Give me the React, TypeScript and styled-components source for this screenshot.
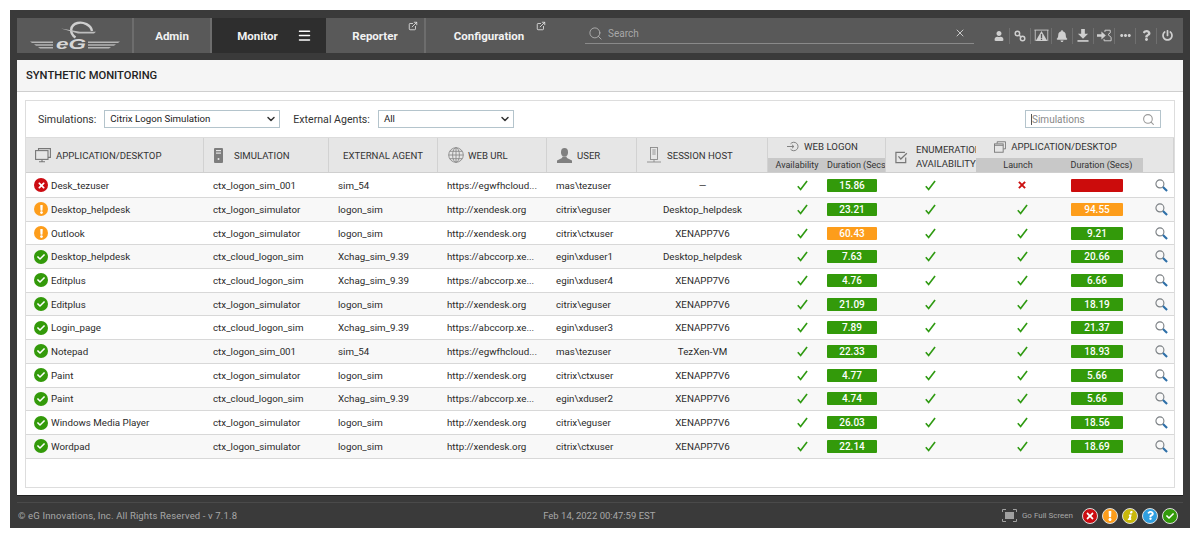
import React from 'react'
import styled, { createGlobalStyle } from 'styled-components'
import { FaUser, FaBell, FaEllipsisH, FaQuestion, FaPowerOff, FaTimes, FaExclamation, FaCheck, FaInfo } from 'react-icons/fa'
import { ChevronDown, Search, X, Menu, ExternalLink } from 'lucide-react'

const GlobalStyle = createGlobalStyle`
	html, body {
		margin: 0;
		background: #fff;
		font-family: Roboto, "Liberation Sans", sans-serif;
	}
	* { box-sizing: border-box; }
	svg { flex-shrink: 0; }
`

const COLUMNS = '178px 125px 109px 109px 90px 131px 58px 59px 91px 84px 83px 31px'

type Tone = 'green' | 'orange' | 'red'
type Status = 'err' | 'warn' | 'ok'

interface RowData {
	status: Status
	app: string
	sim: string
	agent: string
	url: string
	user: string
	host: string
	logon: string
	logonTone: Tone
	launch: boolean
	duration: string
	durationTone: Tone
}

const egwfh = 'https://egwfhcloud...'
const abc = 'https://abccorp.xe...'
const xen = 'http://xendesk.org'
const xa = 'XENAPP7V6'
const dh = 'Desktop_helpdesk'

const make = (status: Status, app: string, sim: string, agent: string, url: string, user: string, host: string, logon: string, duration: string, logonTone: Tone = 'green', durationTone: Tone = 'green', launch = true): RowData => ({
	status, app, sim, agent, url, user, host, logon, duration, logonTone, durationTone, launch,
})

const rows: RowData[] = [
	make('err', 'Desk_tezuser', 'ctx_logon_sim_001', 'sim_54', egwfh, 'mas\\tezuser', '—', '15.86', '', 'green', 'red', false),
	make('warn', dh, 'ctx_logon_simulator', 'logon_sim', xen, 'citrix\\eguser', dh, '23.21', '94.55', 'green', 'orange'),
	make('warn', 'Outlook', 'ctx_logon_simulator', 'logon_sim', xen, 'citrix\\ctxuser', xa, '60.43', '9.21', 'orange'),
	make('ok', dh, 'ctx_cloud_logon_sim', 'Xchag_sim_9.39', abc, 'egin\\xduser1', dh, '7.63', '20.66'),
	make('ok', 'Editplus', 'ctx_cloud_logon_sim', 'Xchag_sim_9.39', abc, 'egin\\xduser4', xa, '4.76', '6.66'),
	make('ok', 'Editplus', 'ctx_logon_simulator', 'logon_sim', xen, 'citrix\\eguser', xa, '21.09', '18.19'),
	make('ok', 'Login_page', 'ctx_cloud_logon_sim', 'Xchag_sim_9.39', abc, 'egin\\xduser3', xa, '7.89', '21.37'),
	make('ok', 'Notepad', 'ctx_logon_sim_001', 'sim_54', egwfh, 'mas\\tezuser', 'TezXen-VM', '22.33', '18.93'),
	make('ok', 'Paint', 'ctx_logon_simulator', 'logon_sim', xen, 'citrix\\ctxuser', xa, '4.77', '5.66'),
	make('ok', 'Paint', 'ctx_cloud_logon_sim', 'Xchag_sim_9.39', abc, 'egin\\xduser2', xa, '4.74', '5.66'),
	make('ok', 'Windows Media Player', 'ctx_logon_simulator', 'logon_sim', xen, 'citrix\\eguser', xa, '26.03', '18.56'),
	make('ok', 'Wordpad', 'ctx_logon_simulator', 'logon_sim', xen, 'citrix\\ctxuser', xa, '22.14', '18.69'),
]

const toneColor: Record<Tone, string> = { green: '#339a0a', orange: '#fd9d1b', red: '#cc0c0c' }

const EgLogo = () => (
	<svg width="110" height="35" viewBox="0 0 110 35">
		<g fill="#b4b4b4">
			<path d="M10 23.5H33V25H12Z" />
			<path d="M14 26.3H33V27.7H16Z" />
			<path d="M18 29H33V30.4H20Z" />
			<path d="M68 23.5H100L98 25H68Z" />
			<path d="M68 26.3H96L94 27.7H68Z" />
			<path d="M68 29H91L89 30.4H68Z" />
		</g>
		<path d="M72 13C71 7 63 3.5 57.5 5C50 7 49 15 55.5 19.5" fill="none" stroke="#cfcfcf" strokeWidth="2.4" />
		<path d="M41 10.5L60 13.8H76L74 15.5H58Z" fill="#bdbdbd" />
		<text x="36" y="31" fontFamily="'Liberation Sans', sans-serif" fontStyle="italic" fontWeight="700" fontSize="15" textLength="30" lengthAdjust="spacingAndGlyphs" fill="#d6d6d6">eG</text>
	</svg>
)

const LinkIcon = () => (
	<svg width="12" height="12" viewBox="0 0 14 14" fill="none" stroke="#cfcfcf" strokeWidth="1.7">
		<circle cx="4" cy="4" r="2.6" />
		<circle cx="10" cy="10" r="2.6" />
		<path d="M6 6l2 2" />
	</svg>
)

const AlarmIcon = () => (
	<svg width="15" height="13" viewBox="0 0 18 14">
		<path d="M0.5 0.5H17.5M1.5 0.5V13.5M16.5 0.5V13.5" stroke="#cfcfcf" fill="none" />
		<path d="M9 1.5L16 13.5H2Z" fill="#cfcfcf" />
		<rect x="8.2" y="5" width="1.6" height="5" fill="#595959" />
		<rect x="8.2" y="10.8" width="1.6" height="1.6" fill="#595959" />
	</svg>
)

const DownloadIcon = () => (
	<svg width="12" height="13" viewBox="0 0 13 14" fill="#cfcfcf">
		<path d="M4.5 0H8.5V5H12L6.5 10.5L1 5H4.5Z" />
		<rect x="0.5" y="12" width="12" height="1.8" />
	</svg>
)

const LoginIcon = () => (
	<svg width="15" height="13" viewBox="0 0 17 14" fill="none">
		<path d="M0 5.5H5V2.5L10 7L5 11.5V8.5H0Z" fill="#cfcfcf" />
		<path d="M9 3 V1 H15 V4 L12.5 6 L16 9 V13 H8 V11" stroke="#cfcfcf" strokeWidth="1.1" />
	</svg>
)

const DesktopIcon = () => (
	<svg width="16" height="15" viewBox="0 0 16 15" fill="none" stroke="#777" strokeWidth="1.1">
		<path d="M3.5 2.5V.6H15.4V9.4H13" />
		<rect x=".6" y="2.6" width="12.4" height="8.8" fill="#e6e6e6" />
		<path d="M4 13.8H10M7 11.5V13.8" />
	</svg>
)

const ServerIcon = () => (
	<svg width="9" height="15" viewBox="0 0 9 15">
		<rect x="0" y="0" width="9" height="15" rx="1" fill="#7d7d7d" />
		<rect x="2" y="2" width="5" height="1.2" fill="#e6e6e6" />
		<rect x="2" y="4.5" width="5" height="1.2" fill="#e6e6e6" />
		<circle cx="4.5" cy="11" r="1" fill="#e6e6e6" />
	</svg>
)

const GlobeIcon = () => (
	<svg width="16" height="16" viewBox="0 0 16 16" fill="none" stroke="#8a8a8a" strokeWidth=".9">
		<circle cx="8" cy="8" r="7.3" />
		<ellipse cx="8" cy="8" rx="3.4" ry="7.3" />
		<path d="M8 .7V15.3M.7 8H15.3M1.7 4.3H14.3M1.7 11.7H14.3" />
	</svg>
)

const UserIcon = () => (
	<svg width="15" height="15" viewBox="0 0 15 15" fill="#7f7f7f">
		<ellipse cx="7.5" cy="4.3" rx="3.5" ry="4.2" />
		<path d="M5.6 8.4H9.4L10 10L15 12.4V15H0V12.4L5 10Z" />
	</svg>
)

const HostIcon = () => (
	<svg width="14" height="16" viewBox="0 0 14 16" fill="none" stroke="#8a8a8a" strokeWidth=".9">
		<rect x="3.5" y=".5" width="7" height="12" />
		<path d="M5.3 3H8.7M5.3 5H8.7M5.3 7H8.7M7 12.5V15M0 15H14" />
	</svg>
)

const LogonIcon = () => (
	<svg width="12" height="11" viewBox="0 0 17 14" fill="none" stroke="#777" strokeWidth="1.3">
		<path d="M5 3.2A6 6 0 1 1 5 10.8" />
		<path d="M0 7H9.5M7 4.5L9.8 7L7 9.5" />
	</svg>
)

const EnumIcon = () => (
	<svg width="13" height="13" viewBox="0 0 17 16" fill="none" stroke="#777" strokeWidth="1.6">
		<path d="M14 8V14.6H1.2V1.2H13" />
		<path d="M4.5 6.5L7.6 10L15.5 2.5" />
	</svg>
)

const WindowsIcon = () => (
	<svg width="12" height="12" viewBox="0 0 17 16" fill="none" stroke="#777" strokeWidth="1.3">
		<path d="M4.5 3V.6H16.4V10.6H13.5" />
		<rect x=".6" y="3.6" width="12.4" height="11.8" />
		<path d="M.6 5.6H13" />
	</svg>
)

const CheckMark = () => (
	<svg width="11" height="11" viewBox="0 0 14 13" fill="none" stroke="#2f9a12" strokeWidth="2.1">
		<path d="M1 7.5L4.6 11.5L12.8 .8" />
	</svg>
)

const CrossMark = () => (
	<svg width="8" height="8" viewBox="0 0 9 9" fill="none" stroke="#cc1111" strokeWidth="2.2">
		<path d="M1 1L8 8M8 1L1 8" />
	</svg>
)

const Magnifier = () => (
	<svg width="13" height="13" viewBox="0 0 14 14" fill="none">
		<circle cx="5.3" cy="5.3" r="4.3" stroke="#7a7f83" strokeWidth="1.2" />
		<path d="M8.6 8.6L13 13" stroke="#2d6fa8" strokeWidth="2.3" />
	</svg>
)

const StatusDot = ({ status }: { status: Status }) => (
	<Dot $bg={status === 'err' ? '#cc0c12' : status === 'warn' ? '#fd9d1b' : '#339a0a'}>
		{status === 'err' && <FaTimes size={9} />}
		{status === 'warn' && <FaExclamation size={9} />}
		{status === 'ok' && <FaCheck size={8} />}
	</Dot>
)

const App: React.FC = () => {
	return (
		<>
			<GlobalStyle />
			<Frame>
				<TopBar>
					<LogoCell><EgLogo /></LogoCell>
					<NavItem $width={78}>Admin</NavItem>
					<NavItem $width={114} $active>
						Monitor
						<Menu size={15} strokeWidth={2.4} color="#fff" />
					</NavItem>
					<NavItem $width={100}>
						Reporter
						<PopOut><ExternalLink size={10} /></PopOut>
					</NavItem>
					<NavItem $width={126} $plain>
						Configuration
						<PopOut><ExternalLink size={10} /></PopOut>
					</NavItem>
					<SearchBar>
						<Search size={15} color="#b4b4b4" strokeWidth={1.4} />
						<SearchInput placeholder="Search" />
						<X size={12} color="#c8c8c8" />
					</SearchBar>
					<IconStrip>
						<ToolIcon><FaUser size={10} /></ToolIcon>
						<ToolIcon><LinkIcon /></ToolIcon>
						<ToolIcon><AlarmIcon /></ToolIcon>
						<ToolIcon><FaBell size={12} /></ToolIcon>
						<ToolIcon><DownloadIcon /></ToolIcon>
						<ToolIcon><LoginIcon /></ToolIcon>
						<ToolIcon><FaEllipsisH size={11} /></ToolIcon>
						<ToolIcon><FaQuestion size={11} /></ToolIcon>
						<ToolIcon><FaPowerOff size={11} /></ToolIcon>
					</IconStrip>
				</TopBar>

				<Panel>
					<PanelTitle>SYNTHETIC MONITORING</PanelTitle>
					<Box>
						<Filters>
							<FilterLabel>Simulations:</FilterLabel>
							<Select $width={176}>
								Citrix Logon Simulation
								<ChevronDown size={12} strokeWidth={3} color="#333" />
							</Select>
							<FilterLabel>External Agents:</FilterLabel>
							<Select $width={136}>
								All
								<ChevronDown size={12} strokeWidth={3} color="#333" />
							</Select>
							<FilterSearch>
								<Caret />
								<FilterInput placeholder="Simulations" />
								<Search size={13} color="#9a9a9a" />
							</FilterSearch>
						</Filters>

						<HeaderGrid>
							<HeadCell $col={1} $pad={9} $gap={5}><DesktopIcon />APPLICATION/DESKTOP</HeadCell>
							<HeadCell $col={2} $pad={10} $gap={11}><ServerIcon />SIMULATION</HeadCell>
							<HeadCell $col={3} $center>EXTERNAL AGENT</HeadCell>
							<HeadCell $col={4} $pad={10} $gap={4}><GlobeIcon />WEB URL</HeadCell>
							<HeadCell $col={5} $pad={10} $gap={5}><UserIcon />USER</HeadCell>
							<HeadCell $col={6} $pad={10} $gap={6}><HostIcon />SESSION HOST</HeadCell>
							<GroupCell $col={7}><LogonIcon />WEB LOGON</GroupCell>
							<EnumCell>
								<EnumIcon />
								<EnumText>ENUMERATION<br />AVAILABILITY</EnumText>
							</EnumCell>
							<GroupCell $col={10}><WindowsIcon />APPLICATION/DESKTOP</GroupCell>
							<HeadCell $col={12} />
							<SubCell $col={7}>Availability</SubCell>
							<SubCell $col={8} $clip>Duration (Secs)</SubCell>
							<SubCell $col={10}>Launch</SubCell>
							<SubCell $col={11}>Duration (Secs)</SubCell>
						</HeaderGrid>

						{rows.map((row, i) => (
							<Row key={i} $first={i === 0} $alt={i % 2 === 1}>
								<AppCell><StatusDot status={row.status} />{row.app}</AppCell>
								<TextCell>{row.sim}</TextCell>
								<TextCell>{row.agent}</TextCell>
								<TextCell>{row.url}</TextCell>
								<TextCell>{row.user}</TextCell>
								<HostCell>{row.host}</HostCell>
								<MarkCell $shift={10}><CheckMark /></MarkCell>
								<BarCell $left={1}><Bar $tone={row.logonTone} $width={50}>{row.logon}</Bar></BarCell>
								<MarkCell><CheckMark /></MarkCell>
								<MarkCell $shift={8}>{row.launch ? <CheckMark /> : <CrossMark />}</MarkCell>
								<BarCell $left={11}><Bar $tone={row.durationTone} $width={52}>{row.duration}</Bar></BarCell>
								<MarkCell $shift={5}><Magnifier /></MarkCell>
							</Row>
						))}
					</Box>
				</Panel>

				<Footer>
					<Copyright>© eG Innovations, Inc. All Rights Reserved - v 7.1.8</Copyright>
					<DateText>Feb 14, 2022 00:47:59 EST</DateText>
					<FullScreen>
						<svg width="15" height="13" viewBox="0 0 15 13" fill="none" stroke="#a0a0a0" strokeWidth="1">
							<path d="M.5 3V.5H4M11 .5H14.5V3M14.5 10V12.5H11M4 12.5H.5V10" />
							<rect x="3.5" y="3.5" width="8" height="6" fill="#a0a0a0" />
						</svg>
						Go Full Screen
					</FullScreen>
					<Legend>
						<LegendDot $bg="#cc0c12"><FaTimes size={10} /></LegendDot>
						<LegendDot $bg="#fd9d1b"><FaExclamation size={10} /></LegendDot>
						<LegendDot $bg="#c9b90c"><SlantedInfo size={9} /></LegendDot>
						<LegendDot $bg="#2f9fe0"><FaQuestion size={9} /></LegendDot>
						<LegendDot $bg="#339a0a"><FaCheck size={8} /></LegendDot>
					</Legend>
				</Footer>
			</Frame>
		</>
	)
}

const Frame = styled.div`
	width: 1180px;
	height: 518px;
	margin: 10px;
	padding: 8px 7px 0;
	background: #3a3a3a;
	display: flex;
	flex-direction: column;
`

const TopBar = styled.div`
	height: 35px;
	background: #595959;
	display: flex;
	align-items: stretch;
	flex-shrink: 0;
`

const LogoCell = styled.div`
	width: 117px;
	display: flex;
	align-items: center;
	justify-content: center;
	border-right: 2px solid #6d6d6d;
`

const NavItem = styled.div<{ $width: number; $active?: boolean; $plain?: boolean }>`
	position: relative;
	width: ${(p) => p.$width}px;
	display: flex;
	align-items: center;
	justify-content: center;
	gap: 19px;
	padding-left: ${(p) => (p.$active ? 11 : 0)}px;
	font-size: 11.5px;
	font-weight: 700;
	color: #f2f2f2;
	background: ${(p) => (p.$active ? '#2e2e2e' : 'transparent')};
	border-right: ${(p) => (p.$active || p.$plain ? 'none' : '2px solid #6d6d6d')};
`

const PopOut = styled.span`
	position: absolute;
	top: 3px;
	right: 6px;
	display: flex;
	color: #e4e4e4;
`

const SearchBar = styled.div`
	width: 389px;
	margin-left: 33px;
	height: 26px;
	display: flex;
	align-items: center;
	gap: 5px;
	padding: 5px 8px 0 3px;
	border-bottom: 1px solid #8a8a8a;
`

const SearchInput = styled.input`
	flex: 1;
	min-width: 0;
	border: none;
	background: transparent;
	outline: none;
	padding: 0;
	font: 10px Roboto, sans-serif;
	color: #ddd;

	&::placeholder {
		color: #a8a8a8;
		opacity: 1;
	}
`

const IconStrip = styled.div`
	margin-left: auto;
	display: flex;
	align-items: center;
	padding-right: 6px;
	height: 100%;
`

const ToolIcon = styled.span`
	width: 21px;
	height: 16px;
	display: flex;
	align-items: center;
	justify-content: center;
	color: #cfcfcf;
	border-left: 1px solid #6f6f6f;

	&:first-child {
		border-left: none;
	}
`

const Panel = styled.div`
	margin-top: 7px;
	height: 436px;
	background: #fff;
	flex-shrink: 0;
	border-bottom: 1px solid #222;
`

const PanelTitle = styled.div`
	height: 32px;
	padding-left: 9px;
	display: flex;
	align-items: center;
	font-size: 11.2px;
	font-weight: 500;
	color: #222;
	background: #f5f5f5;
	border-bottom: 1px solid #cfcfcf;
`

const Box = styled.div`
	margin: 8px 8px 0;
	height: 388px;
	border: 1px solid #ddd;
`

const Filters = styled.div`
	height: 36px;
	padding: 9px 13px 0 12px;
	display: flex;
	align-items: flex-start;
`

const FilterLabel = styled.span`
	font-size: 10.6px;
	line-height: 19px;
	color: #333;
	margin-right: 8px;
`

const Select = styled.div<{ $width: number }>`
	width: ${(p) => p.$width}px;
	height: 18px;
	margin-right: 13px;
	padding: 0 2px 1px 5px;
	display: flex;
	align-items: center;
	justify-content: space-between;
	font-size: 9.7px;
	color: #222;
	background: #fff;
	border: 1px solid #b4c4cc;
`

const FilterSearch = styled.div`
	width: 136px;
	height: 18px;
	margin-left: auto;
	padding: 0 5px;
	display: flex;
	align-items: center;
	border: 1px solid #b4c4cc;
`

const Caret = styled.span`
	width: 1px;
	height: 11px;
	background: #555;
`

const FilterInput = styled.input`
	flex: 1;
	min-width: 0;
	padding: 0;
	border: none;
	outline: none;
	font: 10px Roboto, sans-serif;

	&::placeholder {
		color: #888;
		opacity: 1;
	}
`

const HeaderGrid = styled.div`
	display: grid;
	grid-template-columns: ${COLUMNS};
	grid-template-rows: 20px 14px;
	background: #e6e6e6;
	border-top: 1px solid #dcdcdc;
	border-bottom: 1px solid #cfcfcf;
	box-sizing: content-box;
	font-size: 9.6px;
	color: #333;
`

const HeadCell = styled.div<{ $col: number; $pad?: number; $gap?: number; $center?: boolean }>`
	grid-column: ${(p) => p.$col};
	grid-row: 1 / 3;
	display: flex;
	align-items: center;
	gap: ${(p) => p.$gap ?? 0}px;
	padding-left: ${(p) => p.$pad ?? 0}px;
	justify-content: ${(p) => (p.$center ? 'center' : 'flex-start')};
	border-right: 1px solid #d2d2d2;
	white-space: nowrap;
`

const GroupCell = styled.div<{ $col: number }>`
	grid-column: ${(p) => p.$col} / span 2;
	grid-row: 1;
	display: flex;
	align-items: center;
	justify-content: center;
	gap: 5px;
	padding: 0 8px 3px 0;
`

const EnumCell = styled.div`
	grid-column: 9;
	grid-row: 1 / 3;
	display: flex;
	align-items: center;
	gap: 8px;
	padding-left: 9px;
	padding-top: 4px;
	overflow: hidden;
	white-space: nowrap;
	border-left: 1px solid #d2d2d2;
`

const EnumText = styled.span`
	line-height: 14px;
`

const SubCell = styled.div<{ $col: number; $clip?: boolean }>`
	grid-column: ${(p) => p.$col};
	grid-row: 2;
	display: flex;
	align-items: center;
	justify-content: ${(p) => (p.$clip ? 'flex-start' : 'center')};
	padding-left: ${(p) => (p.$clip ? 1 : 0)}px;
	overflow: hidden;
	white-space: nowrap;
	font-size: 9px;
	background: #c8c8c8;
	color: #333;
`

const Row = styled.div<{ $first: boolean; $alt: boolean }>`
	display: grid;
	grid-template-columns: ${COLUMNS};
	height: ${(p) => (p.$first ? '25px' : '23.7px')};
	align-items: center;
	font-size: 9.75px;
	color: #2a2a2a;
	background: ${(p) => (p.$alt ? '#f8f8f8' : '#fff')};
	border-bottom: 1px solid #d8d8d8;
`

const AppCell = styled.div`
	display: flex;
	align-items: center;
	gap: 3px;
	padding-left: 8px;
	white-space: nowrap;
`

const TextCell = styled.div`
	padding-left: 9px;
	white-space: nowrap;
`

const HostCell = styled.div`
	text-align: center;
	white-space: nowrap;
`

const MarkCell = styled.div<{ $shift?: number }>`
	display: flex;
	align-items: center;
	justify-content: center;
	padding-left: ${(p) => p.$shift ?? 0}px;
`

const BarCell = styled.div<{ $left: number }>`
	display: flex;
	padding-left: ${(p) => p.$left}px;
`

const Bar = styled.div<{ $tone: Tone; $width: number }>`
	width: ${(p) => p.$width}px;
	height: 13px;
	display: flex;
	align-items: center;
	justify-content: center;
	border-radius: 1px;
	font-size: 10px;
	font-weight: 500;
	color: #fff;
	background: ${(p) => toneColor[p.$tone]};
`

const Dot = styled.span<{ $bg: string }>`
	width: 14px;
	height: 14px;
	flex-shrink: 0;
	border-radius: 50%;
	display: inline-flex;
	align-items: center;
	justify-content: center;
	color: #fff;
	background: ${(p) => p.$bg};
`

const Footer = styled.div`
	margin-top: 6px;
	flex: 1;
	display: flex;
	align-items: center;
	padding-right: 5px;
	border-top: 1px solid #4a4a4a;
	font-size: 9.5px;
	color: #a8a8a8;
`

const Copyright = styled.span`
	letter-spacing: 0.15px;
	padding-left: 1px;
`

const DateText = styled.span`
	margin-left: 306px;
`

const FullScreen = styled.span`
	margin-left: auto;
	display: flex;
	align-items: center;
	gap: 5px;
	font-size: 8px;
`

const Legend = styled.div`
	margin-left: 9px;
	display: flex;
	gap: 4px;
`

const LegendDot = styled.span<{ $bg: string }>`
	width: 16px;
	height: 16px;
	border-radius: 50%;
	display: inline-flex;
	align-items: center;
	justify-content: center;
	color: #fff;
	background: ${(p) => p.$bg};
	border: 1px solid #ddd;
`

const SlantedInfo = styled(FaInfo)`
	transform: skewX(-14deg);
`

export default App
